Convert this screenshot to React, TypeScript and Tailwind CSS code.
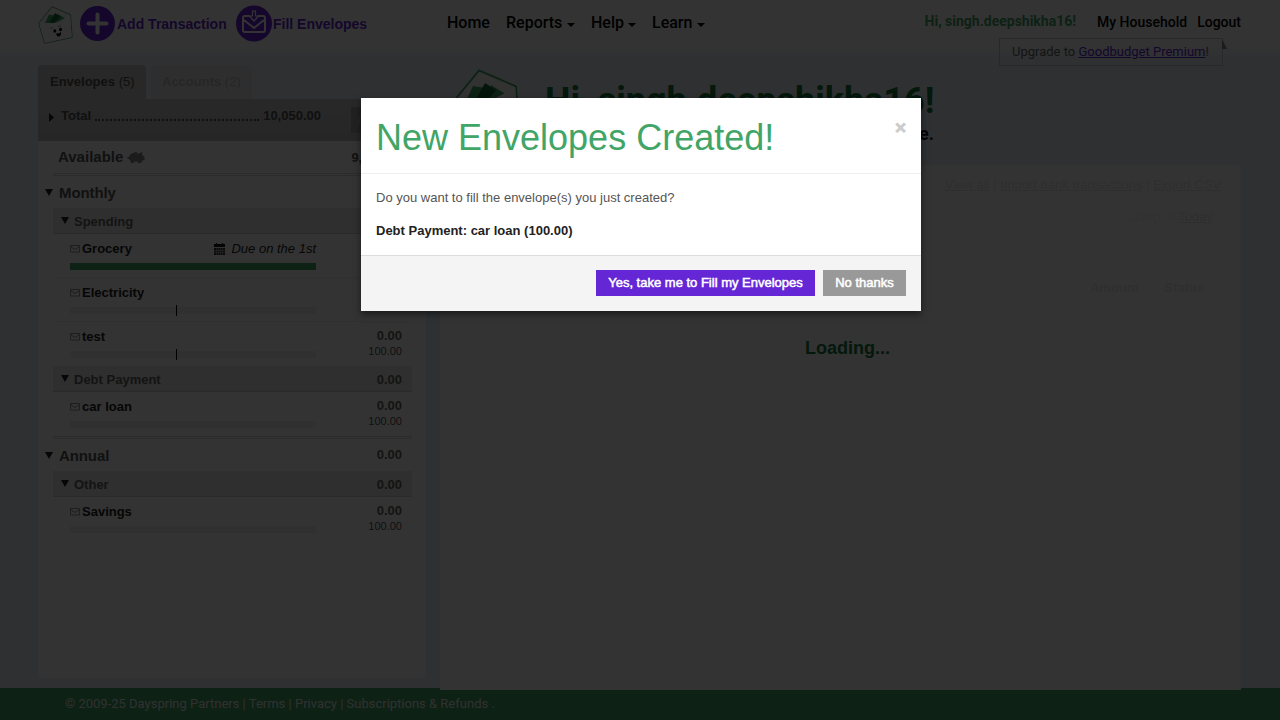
import React from "react";

const ink = "text-[#505050]";

function Caret({ className = "" }: { className?: string }) {
  return (
    <svg width="8" height="4" viewBox="0 0 8 4" className={className}>
      <path d="M0 0h8L4 4z" fill="#000" />
    </svg>
  );
}

function Logo({ w, h }: { w: number; h: number }) {
  return (
    <svg width={w} height={h} viewBox="0 0 36 39" className="shrink-0">
      <path d="M14 .7 32.500 8.700l1.700 22.800L6.500 37.300.7 17z" fill="#f8f8f8" stroke="#41a567" strokeWidth=".9" />
      <path d="m7 17 4-8.500 6 1-4 7.500zM20 8l8 5-10 5z" fill="#41a567" />
      <path d="m11.500 17 5.500-10 5.500 3.500L17 17z" fill="#156b38" />
      <path d="m1.200 17.300 17-.6 13.900-7.400 1.600 21.800-26.900 5.600z" fill="#fff" />
      <ellipse cx="16.800" cy="25" rx="1.500" ry="1.700" fill="#000" />
      <ellipse cx="22.500" cy="23.500" rx="1.500" ry="1.700" fill="#000" />
      <path d="M18 27.500q3 .5 5-1.500.3 4.500-2.500 4.500-2 0-2.500-3z" fill="#000" />
      <path d="m12.500 22.500 2-.8M20.500 20.500l2-.8" stroke="#777" strokeWidth="1" />
    </svg>
  );
}

function Tri() {
  return (
    <svg width="8" height="7" viewBox="0 0 8 7" className="shrink-0">
      <path d="M0 0h8L4 7z" fill="#222" />
    </svg>
  );
}

function Mail() {
  return (
    <svg width="10" height="8" viewBox="0 0 10 8" className="mr-[2px] shrink-0">
      <path d="M.5.5h9v6.500h-9zM.5 1.500 5 4.500 9.500 1.500" fill="none" stroke="#888" strokeWidth=".9" />
    </svg>
  );
}

function Group({ name, amount }: { name: string; amount?: string }) {
  return (
    <div className="ml-[15px] flex h-[26px] w-[359px] items-center border-b border-[#d2d2d2] bg-[#e8e8e8] pl-2 pr-[10px]">
      <Tri />
      <span className="ml-[5px] flex-1 pt-[2px] text-[13px] font-bold text-[#666]">{name}</span>
      {amount && <span className="pt-[2px] text-[13px] font-bold text-[#666]">{amount}</span>}
    </div>
  );
}

interface EnvelopeProps {
  name: string;
  amount?: string;
  budget?: string;
  due?: string;
  full?: boolean;
  mark?: boolean;
  last?: boolean;
}

function Envelope({ name, amount, budget, due, full, mark, last }: EnvelopeProps) {
  return (
    <div className={`ml-[15px] flex h-[44px] w-[359px] justify-between pl-[17px] pr-[10px] ${last ? "" : "border-b border-[#f0f0f0]"}`}>
      <div className="w-[246px]">
        <div className="flex h-[26px] items-center pt-[4px]">
          <Mail />
          <span className="flex-1 text-[13px] font-bold text-[#222]">{name}</span>
          {due && (
            <>
              <svg width="11" height="12" viewBox="0 0 11 12" className="mr-[6px]">
                <path d="M0 1h11v3H0zM2 0h1v2H2zM8 0h1v2H8z" fill="#111" />
                <path d="M0 5h11v7H0z" fill="#333" />
                <path d="M0 7.500h11M0 9.500h11M2.500 5v7M4.500 5v7M6.500 5v7M8.500 5v7" stroke="#ddd" strokeWidth=".5" />
              </svg>
              <span className="text-[13px] italic text-[#222]">{due}</span>
            </>
          )}
        </div>
        <div className={`mt-[3px] flex h-[7px] ${full ? "bg-[#41a567]" : "bg-[#eeeeee]"}`}>
          {mark && <span className="-mt-[2px] ml-[106px] h-[11px] w-px bg-black" />}
        </div>
      </div>
      {amount && (
        <div className="pt-[6px] text-right">
          <div className="h-[15px] text-[13px] font-bold leading-4 text-[#666]">{amount}</div>
          <div className="h-4 text-[11px] leading-4 text-[#555]">{budget}</div>
        </div>
      )}
    </div>
  );
}

function Period({ name, amount }: { name: string; amount?: string }) {
  return (
    <div className="flex h-[32px] items-center pl-[7px] pr-[24px]">
      <Tri />
      <span className="ml-[6px] flex-1 pt-[2px] text-[15px] font-bold tracking-[-0.1px] text-[#555]">{name}</span>
      {amount && <span className="text-[13px] font-bold text-[#666]">{amount}</span>}
    </div>
  );
}

function Rule() {
  return <div className="ml-[15px] h-[3px] w-[359px] border-y border-[#d8d8d8]" />;
}

function Header() {
  return (
    <header className="flex h-[65px] items-start pl-[38px] pr-[38px]">
      <div className="mt-[6px]">
        <Logo w={36} h={39} />
      </div>
      <svg width="36" height="36" viewBox="0 0 36 36" className="ml-[5px] mt-[5px]">
        <circle cx="18.500" cy="18.500" r="17.500" fill="#6527d6" />
        <path d="M18.500 9.500v18M9.500 18.500h18" stroke="#fff" strokeWidth="4" strokeLinecap="round" />
      </svg>
      <span className="ml-[2px] mt-[14px] w-[119px] whitespace-nowrap text-[14px] font-bold leading-5 text-[#6527d6]">Add Transaction</span>
      <svg width="36" height="37" viewBox="0 0 36 37" className="mt-[5px]">
        <circle cx="18" cy="18.500" r="18" fill="#6527d6" />
        <path d="M14 11H9q-2 0-2 2v12q0 2 2 2h18q2 0 2-2V13q0-2-2-2h-5M8 15l10 8 10-8" fill="none" stroke="#fff" strokeWidth="2" />
        <path d="M16.500 6h3v5h3L18 16l-4.500-5h3z" fill="none" stroke="#fff" strokeWidth="1.200" />
      </svg>
      <span className="ml-[1px] mt-[14px] w-[174px] whitespace-nowrap text-[14px] font-bold leading-5 text-[#6527d6]">Fill Envelopes</span>
      <nav className="mt-[13px] flex whitespace-nowrap font-[Roboto,sans-serif] text-[16px] font-medium leading-5 text-black">
        <span className="w-[59px]">Home</span>
        <span className="flex w-[85px] items-center">Reports<Caret className="ml-[5px] mt-[3px]" /></span>
        <span className="flex w-[61px] items-center">Help<Caret className="ml-[4px] mt-[3px]" /></span>
        <span className="flex items-center">Learn<Caret className="ml-[5px] mt-[3px]" /></span>
      </nav>
      <div className="ml-auto flex flex-col whitespace-nowrap font-[Roboto,sans-serif]">
        <div className="mt-[12px] flex h-[26px] justify-end pr-px text-[14px] font-medium leading-5 text-black">
          <span className="-mt-px mr-[21px] font-bold text-[#41a567]">Hi, singh.deepshikha16!</span>
          <span className="mr-[10px]">My Household</span>
          <span>Logout</span>
        </div>
        <div className="mr-[15px] flex items-start self-end">
          <div className="h-[28px] w-[224px] border border-[#c8c8cc] pl-[12px] text-[13px] leading-[26px] text-[#666]">
            Upgrade to <a className="text-[#6527d6] underline">Goodbudget Premium</a>!
          </div>
          <svg width="5" height="11" viewBox="0 0 5 11" className="-ml-px"><path d="M0 1l5 10H0z" fill="#888" /></svg>
        </div>
      </div>
    </header>
  );
}

function Sidebar() {
  return (
    <aside className="w-[389px]">
      <div className="flex h-[34px] text-[13px] font-bold leading-[34px]">
        <div className={`w-[108px] rounded-t bg-[#c8c8c8] pl-[12px] ${ink}`}>Envelopes <span className="font-normal">(5)</span></div>
        <div className="ml-[5px] w-[101px] rounded-t bg-[#e6e6e6] pl-[11px] text-[#bcbcbc]">Accounts <span className="font-normal">(2)</span></div>
      </div>
      <div className="flex h-[42px] bg-linear-to-b from-[#c8c8c8] to-[#bebebe] pl-[11px]">
        <svg width="5" height="9" viewBox="0 0 5 9" className="mt-[14px]"><path d="M0 0l5 4.500L0 9z" fill="#222" /></svg>
        <div className={`ml-[7px] mt-[9px] flex h-4 w-[260px] text-[13px] font-bold leading-4 ${ink}`}>
          <span>Total</span>
          <span className="mx-1 mb-[3px] flex-1 border-b-2 border-dotted border-[#505050]" />
          <span>10,050.00</span>
        </div>
        <div className="ml-[30px] mt-[8px] h-[26px] w-[60px] bg-[#a5a5a5] pl-[6px] text-[13px] leading-[26px] text-[#ccc]">Add</div>
      </div>
      <div className="h-[538px] border-r border-b border-[#e9edf4] bg-white">
        <div className="flex h-[32px] items-center pl-[20px] pr-[24px] pt-px">
          <span className="text-[15px] font-bold text-[#555]">Available</span>
          <svg width="19" height="13" viewBox="0 0 19 13" className="ml-[3px]">
            <path d="M.5 6.500 3 6Q4 2 8 2l5 .5L16 1l.3 3L18.500 6v3l-2 .5L15 12h-3l-.5-1.500H8L7.500 12H5L4 9z" fill="#888" />
            <path d="M7 3Q8 0 11 1v1.500z" fill="#999" />
          </svg>
          <span className="ml-auto text-[13px] font-bold text-[#555]">9,950.00</span>
        </div>
        <Rule />
        <Period name="Monthly" />
        <Group name="Spending" />
        <Envelope name="Grocery" due="Due on the 1st" full />
        <Envelope name="Electricity" mark />
        <Envelope name="test" amount="0.00" budget="100.00" mark last />
        <Group name="Debt Payment" amount="0.00" />
        <Envelope name="car loan" amount="0.00" budget="100.00" last />
        <Rule />
        <Period name="Annual" amount="0.00" />
        <Group name="Other" amount="0.00" />
        <Envelope name="Savings" amount="0.00" budget="100.00" last />
      </div>
    </aside>
  );
}

function Main() {
  return (
    <main className="z-10 ml-[13px] w-[801px]">
      <div className="flex h-[100px] pl-[11px]">
        <div className="mt-[4px]"><Logo w={72} h={78} /></div>
        <div className="ml-[22px] whitespace-nowrap font-[Roboto,sans-serif]">
          <div className="mt-[15px] text-[36px] font-bold leading-[42px] text-[#147a3c]">Hi, singh.deepshikha16!</div>
          <div className="w-[389px] text-right text-[18px] font-bold leading-6 text-[#111]">Welcome to your budget home.</div>
        </div>
      </div>
      <div className="h-[525px] border border-[#f5f7fa] bg-white">
        <div className="mr-[19px] mt-[10px] text-right text-[13px] leading-[18px] text-[#e6e6e6]">
          <u>View all</u> | <u>Import bank transactions</u> | <u>Export CSV</u>
        </div>
        <div className="mr-[27px] mt-[14px] text-right text-[13px] leading-[18px] text-[#f3f3f3]">Jump to <u className="text-[#e6e6e6]">Today</u></div>
        <div className="mr-[36px] mt-[53px] flex justify-end gap-[25px] text-[13px] font-bold leading-[18px] text-[#e8e8e8]">
          <span>Amount</span><span>Status</span>
        </div>
        <div className="mt-[39px] pl-[14px] text-center text-[18px] font-bold leading-6 text-[#147a3c]">Loading...</div>
      </div>
    </main>
  );
}

function Modal() {
  return (
    <div className="absolute inset-0 z-20 bg-black/80">
      <section className="ml-[361px] mt-[98px] h-[213px] w-[560px] bg-white shadow-[0_3px_7px_rgba(0,0,0,0.5)]">
        <div className="flex h-[76px] justify-between border-b border-[#eee] px-[15px]">
          <h1 className="mt-[20px] whitespace-nowrap text-[36px] leading-[40px] text-[#41a567]">New Envelopes Created!</h1>
          <button className="mt-[20px] h-5 text-[19px] font-bold leading-5 text-[#ccc] [-webkit-text-stroke:0.8px_#ccc]">×</button>
        </div>
        <div className="h-[81px] px-[15px] pt-[15px] text-[13px] leading-[18px]">
          <p className="text-[#555]">Do you want to fill the envelope(s) you just created?</p>
          <p className="mt-[15px] font-bold text-[#222]">Debt Payment: car loan (100.00)</p>
        </div>
        <div className="flex h-[56px] justify-end gap-2 border-t border-[#ddd] bg-[#f4f4f4] px-[15px] pt-[14px] text-[13px] leading-[26px] text-white [-webkit-text-stroke:0.5px_white]">
          <button className="h-[26px] w-[219px] bg-[#6527d6]">Yes, take me to Fill my Envelopes</button>
          <button className="h-[26px] w-[83px] bg-[#999]">No thanks</button>
        </div>
      </section>
    </div>
  );
}

export default function App() {
  return (
    <div className="relative flex h-[720px] w-[1280px] flex-col overflow-hidden bg-linear-to-b from-white from-[46px] to-[#ebf0fa] to-[58px] font-['Liberation_Sans',Arial,sans-serif]">
      <Header />
      <div className="flex h-[623px] pl-[38px]">
        <Sidebar />
        <Main />
      </div>
      <footer className="h-[32px] bg-[#41a567] pl-[65px] font-[Roboto,sans-serif] text-[13px] leading-[32px] text-[#f0f0f0]">
        © 2009-25 Dayspring Partners | Terms | Privacy | Subscriptions &amp; Refunds .
      </footer>
      <Modal />
    </div>
  );
}
